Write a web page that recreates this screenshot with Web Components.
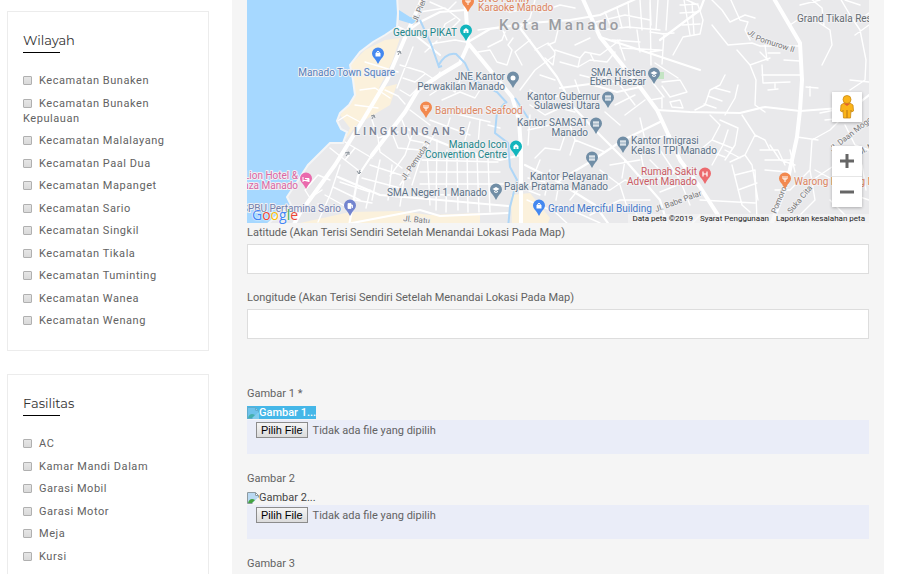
<!DOCTYPE html>
<html lang="id">
<head>
<meta charset="utf-8">
<title>Tambah Kos</title>
<style>
html { scrollbar-width: none; }
body { margin: 0; background: #fff; color: #626262; font: 11px/15px Roboto, "Liberation Sans", sans-serif; }
</style>
</head>
<body>
<listing-page>
  <filter-box slot="side" heading="Wilayah" items="Kecamatan Bunaken|Kecamatan Bunaken Kepulauan|Kecamatan Malalayang|Kecamatan Paal Dua|Kecamatan Mapanget|Kecamatan Sario|Kecamatan Singkil|Kecamatan Tikala|Kecamatan Tuminting|Kecamatan Wanea|Kecamatan Wenang"></filter-box>
  <filter-box slot="side" heading="Fasilitas" items="AC|Kamar Mandi Dalam|Garasi Mobil|Garasi Motor|Meja|Kursi"></filter-box>
  <location-map></location-map>
  <text-field label="Latitude (Akan Terisi Sendiri Setelah Menandai Lokasi Pada Map)"></text-field>
  <text-field label="Longitude (Akan Terisi Sendiri Setelah Menandai Lokasi Pada Map)"></text-field>
  <image-fields>
    <image-field label="Gambar 1 *" alt="Gambar 1..." selected></image-field>
    <image-field label="Gambar 2" alt="Gambar 2..."></image-field>
    <image-field label="Gambar 3" alt="Gambar 3..."></image-field>
  </image-fields>
</listing-page>

<script>
const define = (name, render, setup) => customElements.define(name, class extends HTMLElement {
  constructor() { super(); this.attachShadow({ mode: 'open' }); }
  connectedCallback() {
    this.shadowRoot.innerHTML = render(this);
    if (setup) setup(this.shadowRoot);
  }
});

define('listing-page', () => `
<style>
:host { display: grid; grid-template-columns: 202px minmax(0, 1fr); gap: 23px; padding: 0 18px 0 7px; }
aside { display: flex; flex-direction: column; gap: 23px; padding-top: 11px; }
main { background: #f5f5f5; padding: 0 15px 16px; }
</style>
<aside><slot name="side"></slot></aside>
<main><slot></slot></main>`);

define('filter-box', el => `
<style>
:host { display: block; border: 1px solid #ececec; padding: 18px 15px 22px; }
h2 { margin: 0; font: 400 13px/20px Montserrat, "Open Sans", sans-serif; color: #333; }
h2::after { content: ""; display: block; width: 37px; height: 1px; margin-top: 2px; background: #000; }
ul { list-style: none; margin: 20px 0 0; padding: 0; letter-spacing: 0.05em; }
li { margin-bottom: 8px; }
li:nth-child(even) { margin-bottom: 7px; }
li:last-child { margin-bottom: 0; }
input { appearance: none; box-sizing: border-box; width: 9px; height: 9px; margin: 0 7px 0 0; vertical-align: -1px;
  border: 1px solid #b0b0b0; border-radius: 1px; background: linear-gradient(#e6e6e6, #dadada); }
input:checked { background: #555; }
</style>
<h2>${el.getAttribute('heading')}</h2>
<ul>${el.getAttribute('items').split('|').map(t => `<li><label><input type="checkbox">${t}</label></li>`).join('')}</ul>`);

define('text-field', el => `
<style>
:host { display: block; margin-bottom: 15px; }
label { display: block; line-height: 16px; padding-top: 1px; margin-bottom: 3px; }
input { display: block; box-sizing: border-box; width: 100%; height: 30px; padding: 0 10px; border: 1px solid #ddd; background: #fff; font: inherit; color: inherit; }
</style>
<label for="f">${el.getAttribute('label')}</label><input id="f" type="text">`);

define('image-fields', () => `
<style>:host { display: flex; flex-direction: column; gap: 16px; margin-top: 46px; }</style><slot></slot>`);

define('image-field', el => `
<style>
:host { display: block; }
.label { display: block; line-height: 16px; padding-top: 1px; margin-bottom: 4px; }
.preview { display: flex; align-items: center; width: max-content; height: 13px; margin-bottom: 1px; color: #444; }
:host([selected]) .preview { background: #45b7e8; color: #fff; font-weight: 500; }
:host([selected]) svg { opacity: .35; }
.file { display: flex; align-items: flex-start; gap: 5px; box-sizing: border-box; height: 34px; padding: 2px 9px; background: #eaedf8; }
button { box-sizing: border-box; height: 16px; padding: 0 4px; border: 1px solid #8c8c8c; background: linear-gradient(#f5f5f5, #dcdcdc); color: #000; font: 11px/14px "Liberation Sans", Arial, sans-serif; }
.name { line-height: 18px; }
</style>
<label class="label" for="b">${el.getAttribute('label')}</label>
<div class="preview"><svg width="12" height="12" viewBox="0 0 12 12"><path d="M.5.5h8l3 3v8H.5z" fill="#fff" stroke="#8d9aa0"/><path d="M1 1h7v3h3v2L6 11H1z" fill="#b9d9f2"/><path d="M1 11c1-4 4-5 7-3l-3 3z" fill="#44a340"/><path d="M12 5 5 12h7z" fill="#f5f5f5"/><path d="M8.500.5v3h3" fill="none" stroke="#8d9aa0"/></svg><span>${el.getAttribute('alt')}</span></div>
<div class="file"><button id="b" type="button">Pilih File</button><span class="name">Tidak ada file yang dipilih</span><input type="file" hidden></div>`,
root => {
  const file = root.querySelector('input');
  root.querySelector('button').onclick = () => file.click();
  file.onchange = () => { root.querySelector('.name').textContent = file.files[0].name; };
});

/* Map drawing data */
const coast = 'M240-5H397L398 13 397 27 385 35 373 42 360 52 350 65 353 80 355 95 349 105 340 113 337 121 341 129 347 132 343 143 330 143 320 153 308 165 297 182 287 197 291 205 279 214 263 228H240Z';
const river = 'M420 20 431 44 439 67 442 66M438 66Q446 52 456 54L465 63 473 80 497 92 507 103M505 103 497 112 495 133 508 143 510 167 517 180 510 207 508 228M515 98 528 118';
const major = [
  'M423-3 407 33 387 80 363 120 335 165 300 213 292 228',
  'M465-3 468 43 490 70 512 97 519 120 521 150 521 228',
  'M468 45 460 63 440 75 418 90 405 112 372 155',
  'M582-3 600 37 640 87 657 110 680 160 700 187 725 226',
  'M773-3 800 43 802 80 800 110 797 137 787 183 770 228',
];
const medium = [
  'M520 28 557 77 573 107 600 135 625 160 660 200 668 226', 'M372 155 358 176 349 226', 'M405 33 420 22 440 12 465 10',
  'M352 223 420 210 440 216 508 213', 'M398 27 415 35 440 55', 'M640 87 617 92 590 84 560 88', 'M657 110 690 112 740 113 765 107 800 111 840 108',
  'M560 180 590 162 623 140 660 122', 'M525 165 555 180 595 205 610 226', 'M468 42 490 29 530 23 570 20 600 15 640 -3', 'M521 155 500 160 455 148 405 128',
  'M338 177 380 195 440 200 508 206', 'M600 37 640 50 700 70', 'M660 40 700 10 705 -3', 'M840 118 869 95'
];
const minor = [
  'M424 30 452 28 460 20 445 8 420 12','M430 44 455 40 466 42','M425 52 437 41','M400 65 423 72 435 80 440 72','M403 78 415 82 425 74','M413 47 404 70 397 88','M400 90 410 96 420 86','M385 90 398 96 405 104',
  'M455 18 445 24 440 38','M430 2 448 10 456 2','M442 100 460 92 475 98 480 90','M430 95 445 85 455 92 460 80',
  'M478 52 490 50 497 62 507 65 512 50 508 45 513 38','M488 47 502 40 505 32','M520 28 530 18 535 0','M530 40 515 52 522 65','M520 90 535 70 555 55','M535 50 548 43 555 52 553 65 545 58','M490 5 510 12 530 8','M500 24 507 40','M478 30 500 27',
  'M555 50 580 58 585 52 600 55 620 40','M560 62 578 67 590 60 607 62 615 52','M580 58 578 67','M590 53 594 61','M575 45 590 38','M540 12 560 5 575 8','M560 22 555 42 548 45',
  'M596 22 625 15 650 20','M600 30 628 27 660 30','M605 12 612 30','M617 8 622 28','M628 2 630 28','M640 0 642 30','M650 2 651 65','M612 40 640 42','M620 48 660 50','M618 40 625 60','M637 30 640 52',
  'M650 32 664 34 662 64','M650 52 663 50','M662 34 674 33','M650 -2 651 25','M658 0 656 30','M668 0 666 30','M673 55 683 37 700 34 703 20 698 5 680 -3','M680 13 698 12','M684 0 690 35','M692 2 694 34','M682 25 700 24','M680 5 698 4',
  'M710 -2 722 10 730 22 745 15 755 18','M730-2 740 20 748 22 745 30 750 40','M712 25 728 45 752 43 760 46 775 46 800 46','M737 50 750 65 756 80 755 105 765 112','M750 65 770 58','M767 60 765 45','M762 75 801 75','M762 65 763 83','M764 83 790 82','M768 90 778 89','M784 60 800 61','M768 53 780 53','M775 83 775 88',
  'M760 52 768 60','M790 25 805 15 815 20 830 30 832 45 822 65','M810 -2 822 8 824 25','M800 5 820 0','M840-2 850 15 860 30 866 60 865 80 850 90','M855 35 869 25','M858 20 869 13','M845 0 860 5','M850 80 869 82','M806 87 818 88 M810 87 810 96',
  'M655 63 678 78','M662 82 680 80 687 92 670 97 662 86','M662 97 662 108','M670 102 680 100 683 108 672 107Z','M725 75 720 85 710 90 705 105 695 110','M715 88 730 92','M708 96 722 101','M704 104 716 108','M738 85 735 98 725 115','M653 83 664 97 M650 100 662 98',
  'M710 115 720 125 712 140 700 150','M720 120 738 128 735 145 725 160','M728 130 723 145 712 165','M712 140 732 148','M706 150 725 157','M730 162 745 155 752 165 758 200','M735 175 755 170','M738 190 757 183','M732 165 742 205 750 212','M725 150 740 158','M742 115 755 135 745 155','M755 135 765 140 770 150',
  'M760 150 778 150 785 165','M770 145 780 160 795 165','M765 160 790 160','M765 170 788 172','M790 150 795 172','M775 190 790 190 810 170 812 140 830 130 840 120','M797 137 818 140','M810 170 815 200 795 220','M805 185 835 165','M700 200 755 203','M755 170 757 220','M815 170 830 178','M820 113 835 110 M825 120 845 118',
  'M360 90 375 88 390 98','M365 62 398 72','M355 105 378 108','M336 122 347 115 360 122','M330 148 345 160 358 170','M355 148 345 160','M345 142 372 158','M372 120 378 138 398 132','M378 138 380 152 402 168','M390 128 398 148 420 150','M402 120 410 140 425 143','M412 135 405 155 390 176','M425 143 410 170 400 185','M435 133 420 160 412 185',
  'M340 182 370 192','M333 187 360 200','M325 195 352 210','M318 204 337 212','M340 165 330 195 318 222','M362 178 400 188','M370 165 410 178','M380 160 372 200','M392 165 388 200','M405 172 400 206','M355 200 372 203 M370 190 366 208','M330 180 318 175 305 190 310 198 322 190',
  'M427 150 430 205','M437 140 436 210','M447 150 446 212','M457 150 458 210','M467 150 468 212','M477 155 479 212','M488 158 490 212','M422 160 498 162','M420 172 500 172','M420 184 505 184','M420 194 480 196','M430 120 470 135','M450 118 445 135','M470 122 465 140','M480 120 478 145','M488 125 500 128','M440 110 490 122','M410 110 430 125',
  'M530 105 545 115 560 108 575 112','M528 130 550 125 565 135 560 150 545 148 535 158','M530 115 528 145','M570 125 575 140 570 155','M575 140 605 152','M540 160 530 185 560 190','M550 170 545 195','M560 178 556 200','M585 190 610 190 625 180 640 185','M570 200 582 185','M590 215 620 200 650 200','M600 170 620 185 628 210','M610 165 640 160','M625 160 622 178','M640 150 645 175','M650 160 665 175 685 170','M640 118 645 140 670 135','M605 112 620 125','M575 80 582 100 590 98','M563 95 585 102','M530 90 548 100 560 95','M540 75 555 80','M600 75 620 85 635 105','M615 105 635 95','M625 115 645 100','M580 75 600 80',
  'M660 150 680 180 690 205','M655 180 675 172','M660 192 685 182','M670 205 695 195','M700 215 690 226','M560 205 600 223','M527 190 540 195','M527 200 555 212 570 226','M528 178 545 182','M635 210 640 226','M840 190 869 200 M830 200 845 215 840 226','M845 125 855 145 869 150','M862 165 866 190'
];
const pin = 'M0-6.500a6 6 0 0 1 6 6c0 3-2.500 4.500-4 7L0 10l-2-3.500c-1.500-2.500-4-4-4-7a6 6 0 0 1 6-6z';
const glyphs = {
  food: '<path d="M-2-3v3M0-3v6M-2 0h4M2-3v3" stroke="#fff" stroke-width="1" fill="none"/>',
  place: '<path d="M-2.500 2v-3L0-3l2.500 2v3z" fill="#fff"/><path d="M0 2V0" stroke="currentColor"/>',
  gov: '<path d="M-3-1.500h6v-1h-6zM-3 2.500h6v-1h-6z" fill="#fff"/><path d="M-2-2v4M0-2v4M2-2v4" stroke="#fff" stroke-width="1"/>',
  school: '<path d="M-3.500-1 0-3l3.500 2L0 1zM-2 .8 0 2l2-1.200V2L0 3-2 2z" fill="#fff"/>',
  dot: '<circle r="2.500" fill="#fff"/>',
  bed: '<path d="M-3-2v5M-3 1.500h6V3M-1-.5h4v2" stroke="#fff" fill="#fff" stroke-width="1"/>',
  fuel: '<path d="M-2 2.500v-5h3v5zM1-1h1.500v3" stroke="#fff" fill="#fff" stroke-width=".8"/>',
  hosp: '<path d="M-2-2.500v5M2-2.500v5M-2 0h4" stroke="#fff" stroke-width="1.200"/>',
  bag: '<path d="M-2.500-1h5v3.500h-5z" fill="#fff"/><path d="M-1.200-1v-1q1.200-1.500 2.400 0v1" stroke="#fff" fill="none"/>'
};
const orange = '#f2894f', teal = '#12b5bd', blue = '#4488f0', slate = '#718ea6', pink = '#ea6aad', violet = '#7284cf', red = '#ec6a6e';
const pins = [
  [468, 2, orange, 'food'], [466, 31, teal, 'place'], [378, 54, blue, 'bag'], [513, 78, slate, 'dot'], [426, 108, orange, 'food'],
  [654, 74, slate, 'school'], [608, 98, slate, 'gov'], [596, 124, slate, 'gov'], [516, 147, teal, 'place'], [623, 143, slate, 'gov'],
  [306, 179, pink, 'bed'], [592, 158, slate, 'gov'], [496, 190, slate, 'school'], [350, 206, violet, 'fuel'], [539, 206, blue, 'bag'],
  [705, 174, red, 'hosp'], [785, 179, orange, 'food']
];
const tOrange = '#dd8560', tTeal = '#22868a', tBlue = '#5580bd', tSlate = '#5c7287', tPink = '#d966a5', tRed = '#ca5b63', tViolet = '#7180ad', tBright = '#4277c9';
const labels = [
  [478, 2, 'start', tOrange, 'DNG Family'], [478, 11, 'start', tOrange, 'Karaoke Manado'],
  [457, 36, 'end', tTeal, 'Gedung PIKAT'], [395, 76, 'end', tBlue, 'Manado Town Square'],
  [505, 80, 'end', tSlate, 'JNE Kantor'], [505, 90, 'end', tSlate, 'Perwakilan Manado'],
  [435, 114, 'start', tOrange, 'Bambuden Seafood'],
  [646, 76, 'end', tSlate, 'SMA Kristen'], [646, 85, 'end', tSlate, 'Eben Haezar'],
  [600, 100, 'end', tSlate, 'Kantor Gubernur'], [600, 109, 'end', tSlate, 'Sulawesi Utara'],
  [588, 126, 'end', tSlate, 'Kantor SAMSAT'], [588, 136, 'end', tSlate, 'Manado'],
  [507, 148, 'end', tTeal, 'Manado Icon'], [507, 158, 'end', tTeal, 'Convention Centre'],
  [631, 144, 'start', tSlate, 'Kantor Imigrasi'], [631, 154, 'start', tSlate, 'Kelas I TPI Manado'],
  [298, 179, 'end', tPink, 'Lion Hotel &amp;'], [298, 189, 'end', tPink, 'Plaza Manado'],
  [608, 180, 'end', tSlate, 'Kantor Pelayanan'], [608, 190, 'end', tSlate, 'Pajak Pratama Manado'],
  [487, 196, 'end', tSlate, 'SMA Negeri 1 Manado'], [341, 212, 'end', tViolet, 'SPBU Pertamina Sario'],
  [548, 212, 'start', tBright, 'Grand Merciful Building'],
  [697, 175, 'end', tRed, 'Rumah Sakit'], [697, 185, 'end', tRed, 'Advent Manado'],
  [794, 185, 'start', tOrange, 'Warong Kobong Manado'], [797, 22, 'start', '#666c72', 'Grand Tikala Residence']
];
const streets = [
  [417, 23, -68, 'Jl. Pierre Tendean'], [405, 181, -56, 'Jl. Pemuda 1'], [747, 33, 42, 'Jl.'], [755, 40, 18, 'Pomurow II'],
  [656, 212, -20, 'Jl. Babe Palar'], [403, 221, 6, 'Jl. Batu'], [832, 152, -38, 'Jl. Daan Mogot'], [860, 155, -28, 'Jl. Mawas'],
  [776, 214, -68, 'Pomorow'], [791, 214, -50, 'Suka Cita']
];
const strokes = (list, w) => `<path d="${list.join('')}" stroke-width="${w}"/>`;

define('location-map', () => `
<style>
:host { display: block; position: relative; height: 224px; overflow: hidden; }
.map { display: block; width: 100%; height: 223px; background: #e9e9eb; }
.map text { font: 10px Roboto, sans-serif; paint-order: stroke; stroke: #f1f1f3; stroke-width: 2px; stroke-linejoin: round; }
.map .street text { font-size: 8px; fill: #777; }
.map .area { font-size: 15px; font-weight: 500; letter-spacing: 3px; fill: #9b9da2; }
.map .district { font-size: 11px; font-weight: 500; letter-spacing: 3px; fill: #7c8496; }
.pegman, .zoom { position: absolute; right: 7px; width: 30px; background: #fff; box-shadow: 0 1px 3px #0004; }
.pegman { top: 92px; height: 30px; }
.zoom { top: 146px; }
button { display: grid; place-items: center; width: 30px; height: 30px; margin: 0; padding: 0; border: 0; background: none; }
.zoom button + button { border-top: 1px solid #e6e6e6; height: 31px; }
.terms { position: absolute; right: 0; bottom: 0; display: flex; gap: 7px; padding: 0 4px; font-size: 8px; line-height: 10px; color: #222; background: #f5f5f5b0; }
.terms a { color: inherit; text-decoration: none; }
.logo { position: absolute; left: 5px; bottom: 1px; font: 500 14px/17px "Open Sans", sans-serif; text-decoration: none; text-shadow: 0 0 1px #fff, 0 0 2px #fff; }
.b { color: #4285f4; } .r { color: #ea4335; } .y { color: #fbbc05; } .g { color: #34a853; }
</style>
<svg class="map" viewBox="247 0 622 223" preserveAspectRatio="xMidYMid slice" aria-label="Peta Manado">
  <path d="M350 65 365 50 385 40 400 38 392 62 378 90 363 117 345 140 350 128 340 115 355 95ZM372 90 397 84 390 105 365 120ZM300 223 350 212 400 211 430 215 480 213 480 228H300ZM511 195 530 193 550 218 546 228H512Z" fill="#fbf1dc"/>
  <path d="M657 72h7v7h-7z" fill="#c4e4c4"/>
  <g fill="none" stroke="#fff" stroke-linejoin="round" stroke-linecap="round">${strokes(minor, 1.4)}${strokes(medium, 2.2)}${strokes(major, 4)}</g>
  <path d="${river}" fill="none" stroke="#aed6f7" stroke-width="2"/>
  <path d="${coast}" fill="#a6d8ff" stroke="#f4f5f6" stroke-width="2"/>
  <path d="M399 10 410 17 420 19 412 24 399 20Z" fill="#a6d8ff"/>
  <g fill="none" stroke="#8c949c" stroke-width="1"><path d="M398 55l2-4m-3 1 3-1 1 3M372 119l2-4m-3 1 3-1 1 3M346 156l3-4m-4 1 4-1v3M360 170l-1 4m-2-3 2 3 2-2"/></g>
  <g class="street">${streets.map(([x, y, r, t]) => `<text transform="translate(${x} ${y}) rotate(${r})">${t}</text>`).join('')}</g>
  <text class="area" x="499" y="30">Kota Manado</text>
  <text class="district" x="354" y="135">LINGKUNGAN 5</text>
  ${labels.map(([x, y, a, c, t]) => `<text x="${x}" y="${y}" text-anchor="${a}" fill="${c}">${t}</text>`).join('')}
  ${pins.map(([x, y, c, g]) => `<g transform="translate(${x} ${y})" color="${c}"><path d="${pin}" fill="currentColor"/>${glyphs[g]}</g>`).join('')}
</svg>
<a class="logo" href="#" aria-label="Google"><span class="b">G</span><span class="r">o</span><span class="y">o</span><span class="b">g</span><span class="g">l</span><span class="r">e</span></a>
<div class="pegman"><button type="button" aria-label="Street View"><svg width="16" height="24" viewBox="0 0 16 24"><path d="M5 8h6l3 2 .5 6-2 1-.500-2-.5 8H4.500L4 15l-.5 2-2-1L2 10z" fill="#fbb419" stroke="#c98a17" stroke-width=".8"/><circle cx="8" cy="4.500" r="4" fill="#fbb419" stroke="#c98a17" stroke-width=".8"/><path d="M4.500 8.500h7L8 11z" fill="#e2642a"/><path d="M8 15v8" stroke="#b87414"/></svg></button></div>
<div class="zoom">
  <button type="button" aria-label="Perbesar"><svg width="14" height="14" viewBox="0 0 14 14"><path d="M7 0v14M0 7h14" stroke="#666" stroke-width="3"/></svg></button>
  <button type="button" aria-label="Perkecil"><svg width="14" height="14" viewBox="0 0 14 14"><path d="M0 7h14" stroke="#666" stroke-width="3"/></svg></button>
</div>
<div class="terms"><span>Data peta ©2019</span><a href="#">Syarat Penggunaan</a><a href="#">Laporkan kesalahan peta</a></div>`);
</script>
</body>
</html>
